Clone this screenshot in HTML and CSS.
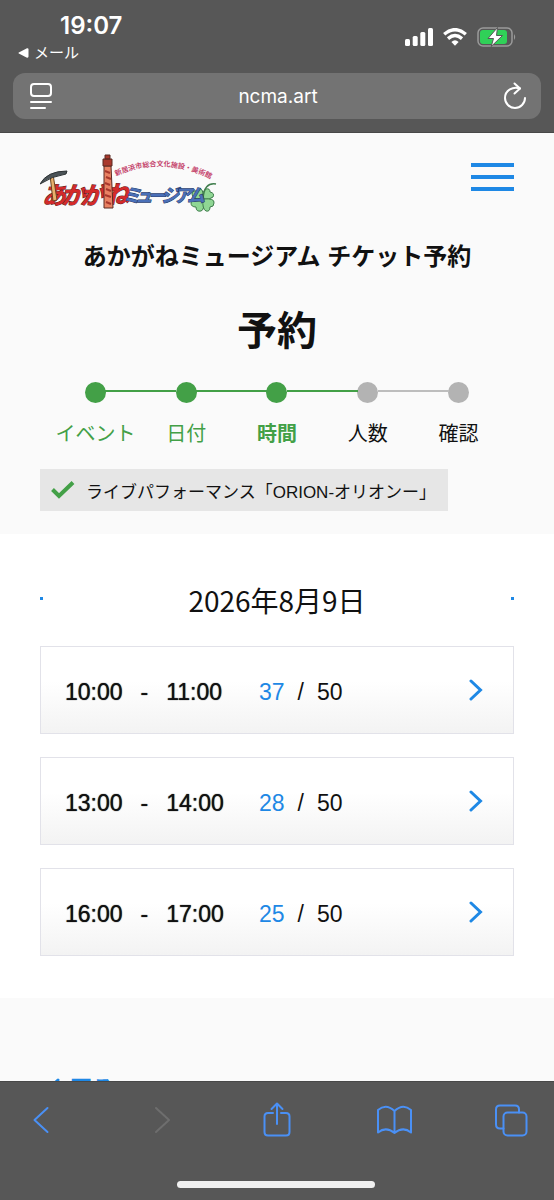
FILE: index.html
```html
<!DOCTYPE html>
<html lang="ja">

<head>
    <meta charset="UTF-8">
    <meta name="viewport" content="width=device-width, initial-scale=1.0">
    <title>あかがねミュージアム チケット予約</title>
    <link rel="stylesheet" href="styles.css">
</head>

<body>
    <header class="browser-top">
        <div class="status-bar">
            <div class="clock">
                <span class="time">19:07</span>
                <a href="#" class="back-app">
                    <svg width="11" height="10" viewBox="0 0 11 10"><path d="M0.8 4.4 L9 0.3 Q10.5 0 10.5 1.4 V8.6 Q10.5 10 9 9.7 L0.8 5.6 Q0 5 0.8 4.4Z" fill="#fff"/></svg>
                    メール
                </a>
            </div>
            <div class="indicators">
                <svg width="28" height="18" viewBox="0 0 28 18" fill="#fff">
                    <rect x="0" y="11" width="5" height="7" rx="1.5"/>
                    <rect x="7.7" y="8" width="5" height="10" rx="1.5"/>
                    <rect x="15.3" y="4" width="5" height="14" rx="1.5"/>
                    <rect x="23" y="0" width="5" height="18" rx="1.5"/>
                </svg>
                <svg width="24" height="18" viewBox="0 0 24 18" fill="none" stroke="#fff" stroke-width="3.4">
                    <path d="M1.2 6.3 Q12 -3 22.8 6.3"/>
                    <path d="M5 10.6 Q12 4.6 19 10.6"/>
                    <path d="M8.4 14 Q12 10.4 15.6 14 L12 17.8Z" fill="#fff" stroke="none"/>
                </svg>
                <svg width="40" height="20" viewBox="0 0 40 20">
                    <rect x="1" y="1" width="34" height="18" rx="5" fill="none" stroke="#9a9a9a" stroke-width="1.5"/>
                    <rect x="3" y="3" width="27" height="14" rx="3" fill="#30d158"/>
                    <path d="M37 7 Q39.4 10 37 13Z" fill="#9a9a9a"/>
                    <path d="M20.5 0.5 L11 11.5 H16.500 L14.200 19.5 L25.500 8.500 H19.500Z" fill="#fff" stroke="#575757" stroke-width="1"/>
                </svg>
            </div>
        </div>
        <div class="address-bar">
            <button class="icon-btn" aria-label="ページメニュー">
                <svg width="24" height="28" viewBox="0 0 24 28" fill="none" stroke="#fff" stroke-width="2" stroke-linecap="round">
                    <rect x="2" y="2" width="20" height="12" rx="3"/>
                    <path d="M2 20 H22 M2 26 H16"/>
                </svg>
            </button>
            <span class="url">ncma.art</span>
            <button class="icon-btn" aria-label="再読み込み">
                <svg width="24" height="28" viewBox="0 0 24 28" fill="none" stroke="#fff" stroke-width="2" stroke-linecap="round" stroke-linejoin="round">
                    <path d="M17 6.5 C10 3.8 2 8.3 2 16 A10 10 0 0 0 22 16"/>
                    <path d="M11.5 1.5 L17 6.5 L11.5 11.5"/>
                </svg>
            </button>
        </div>
    </header>

    <main class="page">
        <section class="intro">
            <div class="site-header">
                <a href="#" class="logo" aria-label="あかがねミュージアム">
                    <svg width="178" height="60" viewBox="0 0 178 60">
                        <defs>
                            <path id="arc" d="M76 23 Q124 1 177 29"/>
                        </defs>
                        <!-- clover -->
                        <g fill="#8fd694" stroke="#3f7d4c" stroke-width="1">
                            <path d="M163 46 Q152 47 152 41 Q153 37 157 38 Q159 34 162 37 Q164 40 163 46Z"/>
                            <path d="M163 46 Q162 38 166 36 Q170 35 170 39 Q175 40 173 44 Q170 47 163 46Z"/>
                            <path d="M163 46 Q151 44 151 50 Q151 54 156 54 Q156 59 161 58 Q165 57 163 46Z"/>
                            <path d="M163 46 Q175 45 174 50 Q174 54 170 54 Q170 59 166 58 Q162 56 163 46Z"/>
                        </g>
                        <path d="M163 46 Q164 29 176 31" fill="none" stroke="#3f7d4c" stroke-width="1.5"/>
                        <text class="logo-sub"><textPath href="#arc">新居浜市総合文化施設・美術館</textPath></text>
                        <text class="logo-red" y="51" x="2 21 40">あかが</text>
                        <text class="logo-red" y="50" x="65">ね</text>
                        <text class="logo-blue" y="49" x="83 95 108 121 134 147">ミュージアム</text>
                        <!-- tower -->
                        <path d="M64 13 H71 L73 55 H64Z" fill="#e98263" stroke="#5b2a22" stroke-width="1"/>
                        <path d="M63 6 H72 V13 H63Z M65 2 H70 V6 H65Z" fill="#a9382c" stroke="#5b2a22" stroke-width="1"/>
                        <path d="M65 18 L70 20 M66 24 L71 26 M65 30 L70 32 M66 36 L71 38 M65 42 L71 44 M66 49 L71 51" stroke="#a9382c" stroke-width="2"/>
                        <!-- pickaxe -->
                        <path d="M10 22 L13 21 L17 47 L13 48Z" fill="#e9b06c" stroke="#6b4320" stroke-width="1"/>
                        <path d="M0 31 Q7 18 27 18 L26 21 Q12 23 0 31Z" fill="#4b5357" stroke="#2d3335" stroke-width="1"/>
                    </svg>
                </a>
                <button class="menu-btn" aria-label="メニュー">
                    <span></span>
                    <span></span>
                    <span></span>
                </button>
            </div>
            <p class="site-title">あかがねミュージアム チケット予約</p>
            <h1>予約</h1>
            <ol class="steps">
                <li class="done">イベント</li>
                <li class="done">日付</li>
                <li class="done current">時間</li>
                <li>人数</li>
                <li>確認</li>
            </ol>
            <div class="selected-event">
                <svg width="24" height="18" viewBox="0 0 24 18" fill="none" stroke="#43a047" stroke-width="4"><path d="M1.5 8.5 L8 15 L22 1.5"/></svg>
                ライブパフォーマンス「ORION-オリオンー」
            </div>
        </section>

        <section class="schedule">
            <div class="date-nav">
                <button class="date-btn" aria-label="前の日"></button>
                <h2>2026年8月9日</h2>
                <button class="date-btn" aria-label="次の日"></button>
            </div>
            <a href="#" class="slot">
                <span class="slot-time"><span>10:00</span><span>-</span><span>11:00</span></span>
                <span class="slot-count"><span class="left">37</span><span>/</span><span>50</span></span>
                <svg class="arrow" width="14" height="22" viewBox="0 0 14 22"><path d="M2 2 L11.5 11 L2 20"/></svg>
            </a>
            <a href="#" class="slot">
                <span class="slot-time"><span>13:00</span><span>-</span><span>14:00</span></span>
                <span class="slot-count"><span class="left">28</span><span>/</span><span>50</span></span>
                <svg class="arrow" width="14" height="22" viewBox="0 0 14 22"><path d="M2 2 L11.5 11 L2 20"/></svg>
            </a>
            <a href="#" class="slot">
                <span class="slot-time"><span>16:00</span><span>-</span><span>17:00</span></span>
                <span class="slot-count"><span class="left">25</span><span>/</span><span>50</span></span>
                <svg class="arrow" width="14" height="22" viewBox="0 0 14 22"><path d="M2 2 L11.5 11 L2 20"/></svg>
            </a>
        </section>

        <div class="page-footer">
            <a href="#" class="back-link">
                <svg class="arrow" width="14" height="22" viewBox="0 0 14 22"><path d="M12 2 L2.5 11 L12 20"/></svg>
                戻る
            </a>
        </div>
    </main>

    <footer class="browser-bottom">
        <nav class="toolbar">
            <button class="tool-btn" aria-label="戻る">
                <svg width="40" height="36" viewBox="0 0 40 36"><path d="M26.5 6 L13.5 18 L26.5 30"/></svg>
            </button>
            <button class="tool-btn" aria-label="進む" disabled>
                <svg width="40" height="36" viewBox="0 0 40 36"><path d="M17 6 L30 18 L17 30"/></svg>
            </button>
            <button class="tool-btn" aria-label="共有">
                <svg width="40" height="36" viewBox="0 0 40 36"><path d="M17 11 H12 Q8.500 11 8.500 14.500 V30 Q8.500 33.500 12 33.500 H30 Q33.500 33.500 33.500 30 V14.500 Q33.500 11 30 11 H25 M21 22 V2 M15.500 7 L21 1.500 L26.500 7"/></svg>
            </button>
            <button class="tool-btn" aria-label="ブックマーク">
                <svg width="40" height="36" viewBox="0 0 40 36"><path d="M20.500 9 Q12 1 4 8 V30.500 Q12 24 20.500 31 Q29 24 37 30.500 V8 Q29 1 20.500 9 V31"/></svg>
            </button>
            <button class="tool-btn" aria-label="タブ">
                <svg width="40" height="36" viewBox="0 0 40 36"><path d="M12.500 26.500 H9 Q5 26.500 5 22.500 V7.500 Q5 3.500 9 3.500 H24 Q28 3.500 28 7.500 V10.500"/><rect x="12.500" y="10.500" width="23" height="23" rx="4"/></svg>
            </button>
        </nav>
        <div class="home-indicator"></div>
    </footer>
</body>

</html>
```
FILE: styles.css
```css
* {
    box-sizing: border-box;
}

body {
    margin: 0;
    height: 100vh;
    display: flex;
    flex-direction: column;
    font-family: "Liberation Sans", "Noto Sans CJK JP", sans-serif;
    color: #111;
    background-color: #fff;
}

a {
    color: inherit;
    text-decoration: none;
}

button {
    padding: 0;
    border: none;
    background: none;
    cursor: pointer;
}

svg {
    display: block;
    flex-shrink: 0;
}

/* browser top */
.browser-top {
    flex-shrink: 0;
    padding: 12px 13px 13px;
    background-color: #575757;
    border-bottom: 1px solid #484848;
    color: #fff;
    font-family: Inter, "Noto Sans CJK JP", sans-serif;
}

.status-bar {
    display: flex;
    justify-content: space-between;
    height: 61px;
}

.time {
    display: block;
    padding-left: 47px;
    font-size: 24px;
    font-weight: 600;
    line-height: 28px;
}

.back-app {
    display: flex;
    align-items: center;
    gap: 5px;
    padding-left: 5px;
    font-size: 15px;
    line-height: 26px;
}

.indicators {
    display: flex;
    align-items: center;
    gap: 10px;
    height: 50px;
    padding-right: 24px;
}

.address-bar {
    display: flex;
    align-items: center;
    justify-content: space-between;
    height: 46px;
    padding: 0 14px 0 16px;
    border-radius: 12px;
    background-color: #737373;
}

.url {
    font-size: 19px;
}

/* page */
.page {
    flex: 1;
    min-height: 0;
    overflow: hidden;
    background-color: #fafafa;
}

.intro {
    padding: 20px 40px 23px;
}

.site-header {
    display: flex;
    justify-content: space-between;
    height: 84px;
}

.logo-sub {
    font: bold 7px "Noto Sans CJK JP", sans-serif;
    fill: #c4436b;
}

.logo-red,
.logo-blue {
    font-family: "Noto Sans CJK JP", sans-serif;
    font-weight: bold;
    font-style: italic;
    stroke-width: 1px;
    paint-order: stroke;
}

.logo-red {
    font-size: 24px;
    fill: #d42a2a;
    stroke: #5b1a1a;
}

.logo-blue {
    font-size: 18px;
    fill: #4a70b8;
    stroke: #26355c;
}

.menu-btn {
    display: flex;
    flex-direction: column;
    gap: 8px;
    width: 43px;
    height: 28px;
    margin-top: 10px;
}

.menu-btn span {
    width: 100%;
    height: 4px;
    background-color: #1e88e5;
}

.site-title {
    margin: 0;
    font-size: 24px;
    font-weight: bold;
    line-height: 40px;
    text-align: center;
}

h1 {
    margin: 24px 0 20px;
    font-size: 40px;
    line-height: 60px;
    text-align: center;
}

.steps {
    display: grid;
    grid-template-columns: repeat(5, 1fr);
    margin: 0 10px 20px;
    padding: 0;
    list-style: none;
    font-size: 20px;
    line-height: 30px;
    text-align: center;
    white-space: nowrap;
}

.steps li {
    position: relative;
}

.steps li::before {
    content: "";
    display: block;
    width: 21px;
    height: 21px;
    margin: 1px auto 16px;
    border-radius: 50%;
    background-color: #b3b3b3;
}

/* line to the previous step */
.steps li + li::after {
    content: "";
    position: absolute;
    top: 9px;
    right: calc(50% + 10px);
    width: calc(100% - 20px);
    height: 2px;
    background-color: #bdbdbd;
}

.steps .done {
    color: #43a047;
}

/* the line before the next open step is green too */
.steps .done::before,
.steps .done + li::after {
    background-color: #43a047 !important;
}

.steps .current {
    font-weight: bold;
}

.selected-event {
    display: flex;
    align-items: center;
    gap: 11px;
    width: fit-content;
    height: 42px;
    padding: 0 12px 0 11px;
    background-color: #e6e6e6;
    font-size: 17px;
    white-space: nowrap;
}

.schedule {
    display: flex;
    flex-direction: column;
    gap: 23px;
    padding: 43px 40px 42px;
    background-color: #fff;
}

.date-nav {
    display: flex;
    align-items: center;
    justify-content: space-between;
    height: 46px;
}

.date-nav h2 {
    margin: 0;
    font-family: "Noto Sans CJK JP", sans-serif;
    font-size: 28px;
    font-weight: normal;
    line-height: 46px;
}

.date-btn {
    width: 3px;
    height: 3px;
    margin-bottom: 3px;
    background-color: #1e88e5;
}

.slot {
    display: flex;
    align-items: center;
    height: 88px;
    padding: 0 30px 0 24px;
    border: 1px solid #e2e2e9;
    background: linear-gradient(#fff 40%, #f3f3f3);
    font-size: 23px;
}

.slot-time {
    display: flex;
    gap: 18px;
    width: 194px;
    padding-top: 4px;
    text-shadow: 0 0 1px #111;
}

.slot-count {
    display: flex;
    flex: 1;
    gap: 13px;
    padding-top: 4px;
}

.slot-count .left {
    color: #1e88e5;
}

.arrow {
    fill: none;
    stroke: #1e88e5;
    stroke-width: 3;
    stroke-linecap: round;
}

.page-footer {
    padding: 75px 46px;
}

.back-link {
    display: flex;
    align-items: center;
    gap: 10px;
    color: #1e88e5;
    font-size: 22px;
    font-weight: bold;
    line-height: 32px;
}

/* browser bottom */
.browser-bottom {
    flex-shrink: 0;
    padding: 20px 23px 12px 21px;
    border-top: 1px solid #484848;
    background-color: #575757;
}

.toolbar {
    display: flex;
    justify-content: space-between;
}

.tool-btn svg {
    fill: none;
    stroke: #4a90f5;
    stroke-width: 2;
    stroke-linecap: round;
    stroke-linejoin: round;
}

.tool-btn:disabled svg {
    stroke: #6e6e6e;
}

.home-indicator {
    width: 198px;
    height: 7px;
    margin: 43px auto 0;
    border-radius: 4px;
    background-color: #f0f0f0;
}
```
